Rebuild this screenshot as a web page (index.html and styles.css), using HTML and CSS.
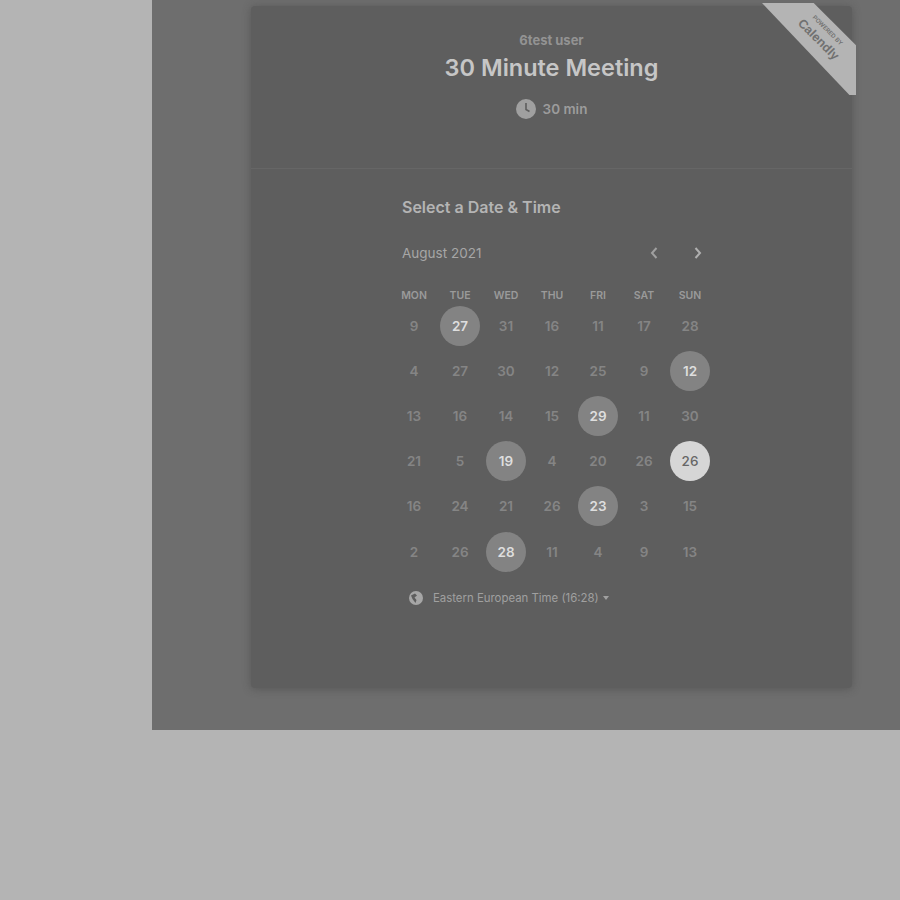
FILE: index.html
```html
<!DOCTYPE html>
<html lang="en">
<head>
<meta charset="utf-8">
<title>30 Minute Meeting</title>
<link rel="stylesheet" href="styles.css">
</head>
<body>
<div class="overlay">
  <main class="card">
    <a class="ribbon"><span class="ribbon-text"><span class="powered">POWERED BY</span><span class="brand">Calendly</span></span></a>
    <header class="head">
      <div class="owner">6test user</div>
      <h1 class="title">30 Minute Meeting</h1>
      <div class="duration">
        <svg class="clock" viewBox="0 0 20 20"><circle cx="10" cy="10" r="10" fill="#a0a0a0"/><path d="M10 4v6.5l3.5 2" fill="none" stroke="#5e5e5e" stroke-width="1.6"/></svg>
        <span>30 min</span>
      </div>
    </header>
    <section class="picker">
      <h2 class="pick-title">Select a Date &amp; Time</h2>
      <div class="month-row">
        <span class="month">August 2021</span>
        <div class="nav">
          <svg class="chev" viewBox="0 0 10 16"><path d="M7.5 3 3 8l4.5 5" fill="none" stroke="#a0a0a0" stroke-width="2"/></svg>
          <svg class="chev" viewBox="0 0 10 16"><path d="M2.5 3 7 8l-4.5 5" fill="none" stroke="#b0b0b0" stroke-width="2"/></svg>
        </div>
      </div>
      <div class="grid">
        <span class="dow">MON</span><span class="dow">TUE</span><span class="dow">WED</span><span class="dow">THU</span><span class="dow">FRI</span><span class="dow">SAT</span><span class="dow">SUN</span>
        <span class="day">9</span><span class="day on">27</span><span class="day">31</span><span class="day">16</span><span class="day">11</span><span class="day">17</span><span class="day">28</span>
        <span class="day">4</span><span class="day">27</span><span class="day">30</span><span class="day">12</span><span class="day">25</span><span class="day">9</span><span class="day on">12</span>
        <span class="day">13</span><span class="day">16</span><span class="day">14</span><span class="day">15</span><span class="day on">29</span><span class="day">11</span><span class="day">30</span>
        <span class="day">21</span><span class="day">5</span><span class="day on">19</span><span class="day">4</span><span class="day">20</span><span class="day">26</span><span class="day sel">26</span>
        <span class="day">16</span><span class="day">24</span><span class="day">21</span><span class="day">26</span><span class="day on">23</span><span class="day">3</span><span class="day">15</span>
        <span class="day">2</span><span class="day">26</span><span class="day on">28</span><span class="day">11</span><span class="day">4</span><span class="day">9</span><span class="day">13</span>
      </div>
      <div class="tz">
        <svg class="globe" viewBox="0 0 14 14"><circle cx="7" cy="7" r="7" fill="#a6a6a6"/><path d="M2 4.5 6 2.5l2 2-2.5 2 2 2.5-1 3L3.5 8z" fill="#5e5e5e"/></svg>
        <span>Eastern European Time (16:28)</span>
        <span class="caret"></span>
      </div>
    </section>
  </main>
</div>
</body>
</html>
```
FILE: styles.css
```css
* { box-sizing: border-box; }
html, body { margin: 0; padding: 0; }
body {
  background: #b4b4b4;
  height: 900px;
  overflow: hidden;
  font-family: Inter, "Open Sans", sans-serif;
}
.overlay {
  margin-left: 152px;
  height: 730px;
  background: #6e6e6e;
  padding: 6px 0 0 99px;
  overflow: hidden;
}
.card {
  position: relative;
  width: 601px;
  height: 682px;
  background: #5e5e5e;
  border-radius: 4px;
  box-shadow: 0 1px 8px rgba(60, 60, 60, .45);
}
.head {
  height: 163px;
  border-bottom: 1px solid #666;
  padding-top: 25px;
  display: flex;
  flex-direction: column;
  align-items: center;
}
.owner {
  font-size: 13px;
  line-height: 18px;
  font-weight: 700;
  color: #939393;
}
.title {
  margin: 4px 0 0;
  font-size: 23.5px;
  line-height: 30px;
  font-weight: 600;
  color: #c6c6c6;
}
.duration {
  margin-top: 16px;
  display: flex;
  align-items: center;
  gap: 7px;
  font-size: 13.5px;
  font-weight: 600;
  color: #9c9c9c;
  line-height: 20px;
}
.clock { width: 20px; height: 20px; }
.picker {
  padding: 26px 0 0 142px;
}
.pick-title {
  margin: 0 0 0 9px;
  font-size: 16px;
  line-height: 24px;
  font-weight: 600;
  color: #b4b4b4;
}
.month-row {
  margin-top: 22px;
  width: 320px;
  padding: 0 0 0 9px;
  height: 24px;
  display: flex;
  justify-content: space-between;
  align-items: center;
}
.month { font-size: 13.5px; color: #a6a6a6; }
.nav { display: flex; gap: 34px; margin-right: 10px; }
.chev { width: 10px; height: 16px; }
.grid {
  margin-top: 19px;
  margin-left: -2px;
  width: 322px;
  display: grid;
  grid-template-columns: repeat(7, 46px);
  grid-template-rows: 19px repeat(6, 45.2px);
  align-items: center;
  justify-items: center;
}
.dow {
  font-size: 10.5px;
  font-weight: 600;
  color: #9a9a9a;
  align-self: start;
  line-height: 24px;
}
.day {
  width: 40px;
  height: 40px;
  border-radius: 50%;
  display: flex;
  align-items: center;
  justify-content: center;
  font-size: 13.5px;
  font-weight: 600;
  color: #858585;
}
.on { background: #838383; color: #dedede; }
.sel { background: #d6d6d6; color: #666; font-weight: 500; }
.tz {
  margin: 14px 0 0 16px;
  display: flex;
  align-items: center;
  font-size: 11.4px;
  color: #a0a0a0;
  line-height: 20px;
}
.globe { width: 14px; height: 14px; margin-right: 10px; }
.caret {
  margin-left: 4px;
  border: 3.5px solid transparent;
  border-top: 4px solid #a0a0a0;
  border-bottom: 0;
}
.ribbon {
  position: absolute;
  top: -3px;
  right: -4px;
  width: 94px;
  height: 92px;
  background: #b4b4b4;
  clip-path: polygon(0 0, 55% 0, 100% 46%, 100% 100%, 93% 100%);
}
.ribbon-text {
  position: absolute;
  left: 30px;
  top: 21px;
  width: 60px;
  display: flex;
  flex-direction: column;
  align-items: center;
  transform: rotate(45deg);
  color: #707070;
}
.powered { font-size: 6px; line-height: 8px; font-weight: 600; white-space: nowrap; }
.brand { margin-top: 3px; font-size: 12.5px; line-height: 13px; font-weight: 700; font-family: "Liberation Sans", sans-serif; }
```
